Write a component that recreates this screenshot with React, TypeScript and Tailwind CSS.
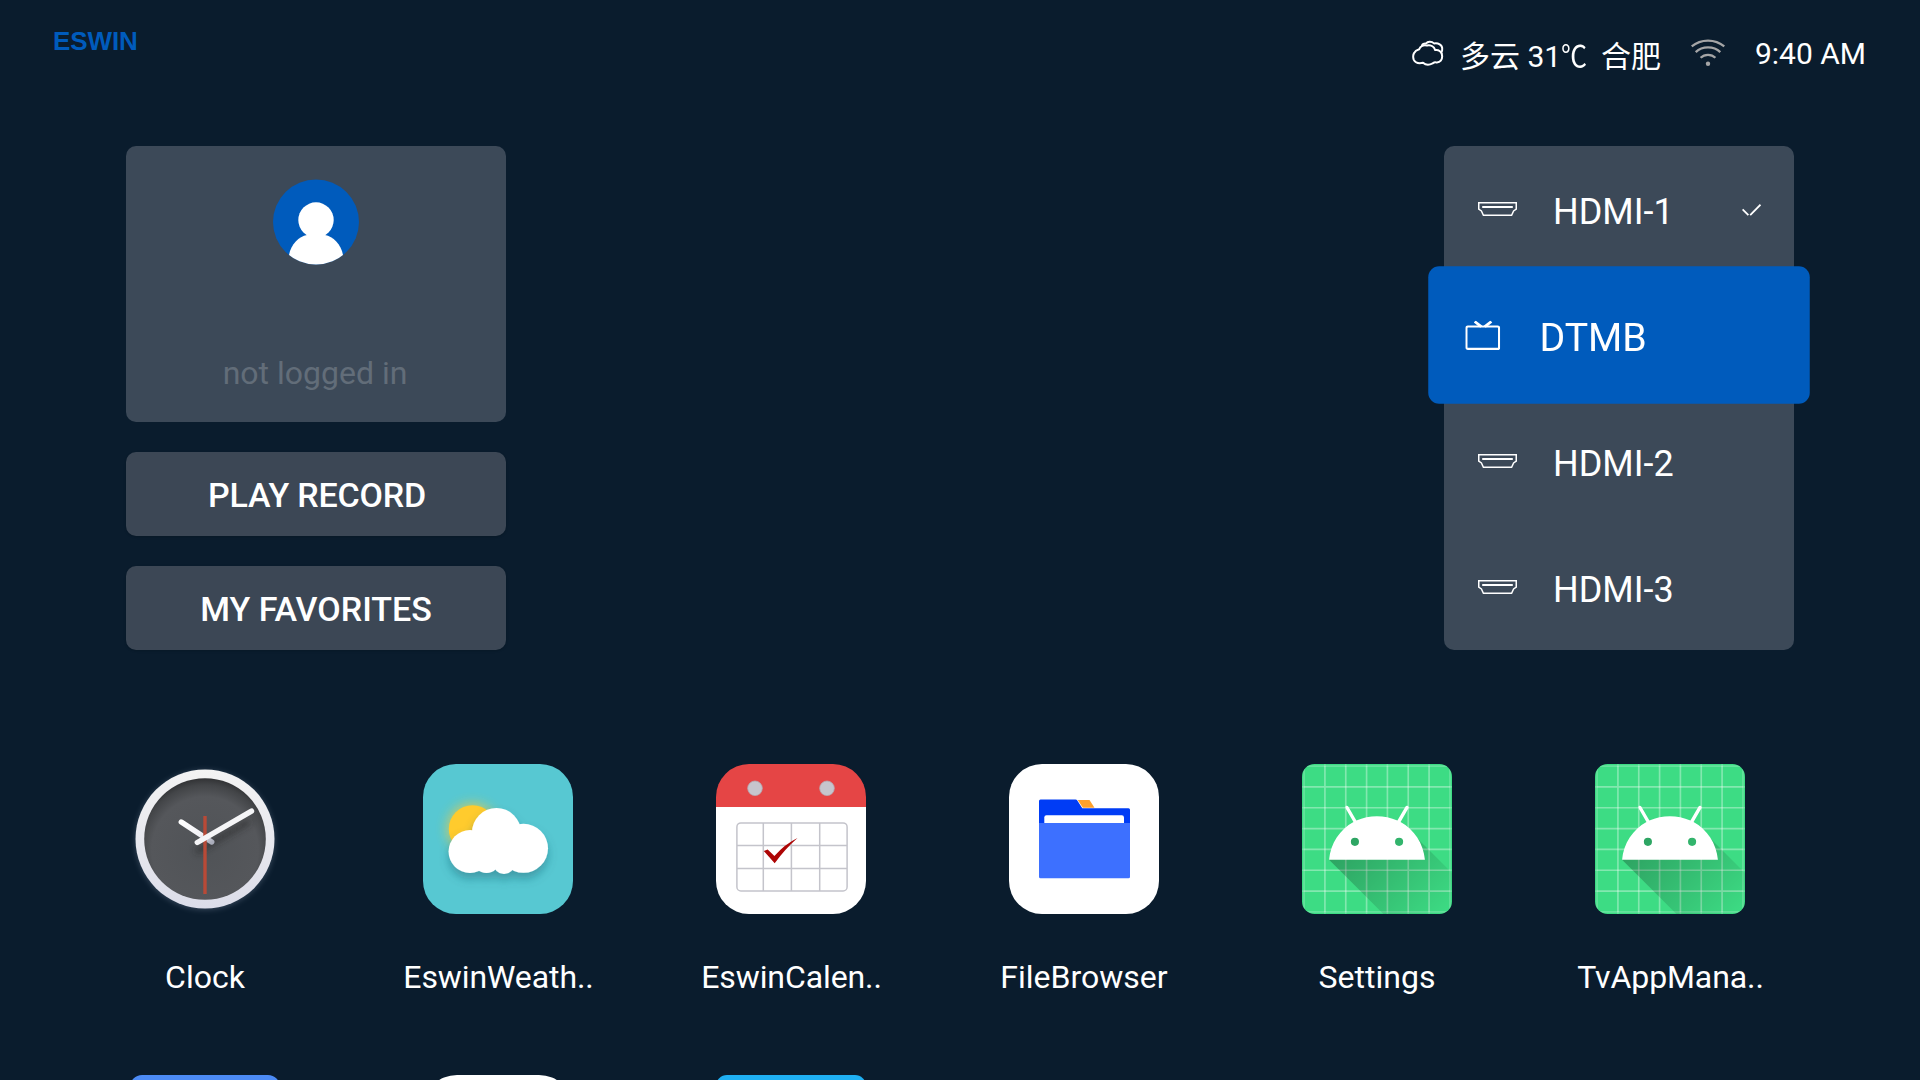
import type { ReactNode } from "react";

function CloudIcon() {
  return (
    <svg width="32" height="26" viewBox="0 0 32 26" fill="none" stroke="#fff" strokeWidth="2" strokeLinejoin="round" strokeLinecap="round">
      <path d="M7.2 9.2C8 6.200 11.600 4.400 15 5.500C18.500 4.800 22 6.600 23.200 10.100C26.800 9.600 30 11.800 30 15.200C30.800 19.600 28 23 24 22.400C22.400 22 21.800 22.600 20.600 23.400C17.600 25 13.600 25 11 22.800C7 23.600 3 22.600 1.700 19.600C0.200 15.200 2 10.600 7.200 9.200Z" />
      <path d="M10 5.400C10.400 4 12.200 3.400 14 3.500C15.600 1.400 19.400 0.900 22 3.400C26 2.600 30.400 4.800 30.200 8.600C30.400 10.600 30 11.800 29.200 12.600" />
    </svg>
  );
}

function WifiIcon() {
  return (
    <svg width="34" height="28" viewBox="0 0 34 28" fill="none" stroke="#a5a5a6" strokeWidth="2.300">
      <path d="M0.700 7.400C9.800 -0.400 24.200 -0.400 33.300 7.400" />
      <path d="M4.700 13.100C11.400 6.900 22.600 6.900 29.300 13.100" />
      <path d="M9.600 18.800C13.600 14.800 20.400 14.800 24.400 18.800" />
      <circle cx="17" cy="24.700" r="2.200" fill="#a5a5a6" stroke="none" />
    </svg>
  );
}

function HdmiIcon() {
  return (
    <svg width="39" height="14" viewBox="0 0 39 14" fill="none" stroke="#fff" strokeWidth="1.500">
      <path d="M0.750 0.750H38.250V7.200L35.600 9L33.600 13.250H5.400L3.400 9L0.750 7.200Z" />
      <path d="M4.200 5H34.800" strokeWidth="2" />
    </svg>
  );
}

function TvIcon() {
  return (
    <svg width="32" height="27" viewBox="0 0 32 27" fill="none" stroke="#fff" strokeWidth="2">
      <rect x="1" y="5.200" width="30" height="20.600" rx="1.400" />
      <path d="M8.600 0.600L14.600 5.400M23.900 0.600L17.900 5.400" strokeWidth="2.600" />
    </svg>
  );
}

function CheckIcon() {
  return (
    <svg width="19" height="12" viewBox="0 0 19 12" fill="none" stroke="#fff" strokeWidth="1.800" className="relative top-px left-px">
      <path d="M0.600 5.400L6.400 11.200M8.200 11.200L18.500 0.700" />
    </svg>
  );
}

function Avatar() {
  return (
    <svg width="86" height="86" viewBox="0 0 86 86">
      <defs>
        <clipPath id="avatar">
          <ellipse cx="43" cy="43" rx="43" ry="42.500" />
        </clipPath>
      </defs>
      <g clipPath="url(#avatar)">
        <rect width="86" height="86" fill="#005bbc" />
        <circle cx="43" cy="41" r="17.700" fill="#fff" />
        <path d="M16 76C18 65 26 57.500 34 56H52C60 57.500 68 65 70 76V86H16Z" fill="#fff" />
      </g>
    </svg>
  );
}

function ClockIcon() {
  return (
    <svg width="150" height="150" viewBox="0 0 150 150" className="overflow-visible">
      <defs>
        <linearGradient id="rim" x1="0" y1="0" x2="0" y2="1">
          <stop offset="0" stopColor="#f3f3f3" />
          <stop offset="1" stopColor="#dcdde9" />
        </linearGradient>
        <radialGradient id="face" gradientUnits="userSpaceOnUse" cx="75" cy="86" r="74">
          <stop offset="0" stopColor="#505357" />
          <stop offset="0.720" stopColor="#55575b" />
          <stop offset="0.880" stopColor="#434548" />
          <stop offset="1" stopColor="#2b2c2e" />
        </radialGradient>
        <linearGradient id="hand" x1="0" y1="0" x2="1" y2="1">
          <stop offset="0" stopColor="#fff" />
          <stop offset="0.650" stopColor="#f0f0f5" />
          <stop offset="1" stopColor="#aaadbb" />
        </linearGradient>
        <filter id="soft" x="-30%" y="-30%" width="160%" height="160%">
          <feGaussianBlur stdDeviation="3" />
        </filter>
      </defs>
      <circle cx="75" cy="76" r="69" fill="#8594ab" opacity="0.450" filter="url(#soft)" />
      <circle cx="75" cy="75" r="69.500" fill="url(#rim)" />
      <circle cx="75" cy="75" r="60.800" fill="url(#face)" />
      <path d="M66 88L120 57" stroke="#222" strokeWidth="6" opacity="0.500" filter="url(#soft)" />
      <path d="M51.300 58L81.700 78" stroke="url(#hand)" strokeWidth="5.400" strokeLinecap="round" />
      <path d="M75 52V130" stroke="#b84a37" strokeWidth="3.400" />
      <path d="M67.300 78.500L121.500 47.200" stroke="#f5f5f7" strokeWidth="5.400" strokeLinecap="round" />
    </svg>
  );
}

function WeatherIcon() {
  return (
    <svg width="150" height="150" viewBox="0 0 150 150">
      <defs>
        <filter id="glow" x="-50%" y="-50%" width="200%" height="200%">
          <feGaussianBlur stdDeviation="6" />
        </filter>
        <filter id="cloudShadow" x="-30%" y="-30%" width="160%" height="170%">
          <feDropShadow dx="0" dy="6" stdDeviation="5" floodColor="#1b5a66" floodOpacity="0.400" />
        </filter>
      </defs>
      <rect width="150" height="150" rx="33" fill="#57c8d2" />
      <circle cx="49.500" cy="64.700" r="25" fill="#ffcb2d" opacity="0.700" filter="url(#glow)" />
      <circle cx="49.500" cy="64.900" r="23.700" fill="#ffcb2d" />
      <g fill="#fff" filter="url(#cloudShadow)">
        <circle cx="47" cy="87.500" r="21.400" />
        <circle cx="73.500" cy="68.500" r="24.500" />
        <circle cx="100.500" cy="84.300" r="24.500" />
        <circle cx="63.500" cy="96" r="13" />
        <circle cx="81" cy="99.500" r="10.500" />
        <rect x="47" y="72" width="52" height="33" />
      </g>
    </svg>
  );
}

function CalendarIcon() {
  return (
    <svg width="150" height="150" viewBox="0 0 150 150">
      <defs>
        <clipPath id="calendar">
          <rect width="150" height="150" rx="33" />
        </clipPath>
      </defs>
      <g clipPath="url(#calendar)">
        <rect y="40" width="150" height="110" fill="#fff" />
        <rect width="150" height="43" fill="#e54545" />
      </g>
      <g fill="#c6c5cd" stroke="#b5aab2" strokeWidth="0.800">
        <circle cx="39" cy="24.300" r="7.300" />
        <circle cx="111" cy="24.300" r="7.300" />
      </g>
      <g fill="none" stroke="#c4c4cb" strokeWidth="1.500">
        <rect x="20.900" y="58.900" width="110.200" height="68" rx="4" />
        <path d="M47.300 59V127M75.400 59V127M103.700 59V127M21 81.500H131M21 104.500H131" />
      </g>
      <path d="M47.800 87L51.700 85.500L58.400 92Q69 80 81.500 74Q69 85 58.700 99.200Z" fill="#ad0505" />
    </svg>
  );
}

function FileIcon() {
  return (
    <svg width="150" height="150" viewBox="0 0 150 150">
      <rect width="150" height="150" rx="33" fill="#fff" />
      <path d="M30 60V37Q30 35.500 31.500 35.500H66.500Q67.700 35.500 68.300 36.500L73.300 44.300H119.500Q121 44.300 121 45.800V60Z" fill="#003cf5" />
      <path d="M68.700 36H80.500L85.500 43.700H73.900Z" fill="#ffa12b" />
      <path d="M35.300 59.500V53.500Q35.300 51.300 37.500 51.300H112.800Q115 51.300 115 53.500V59.500Z" fill="#fff" />
      <path d="M30 59H121V112.700Q121 114.200 119.500 114.200H31.500Q30 114.200 30 112.700Z" fill="#3d70ff" />
    </svg>
  );
}

function AndroidIcon({ id }: { id: string }) {
  const all = [19, 29, 39, 49, 59, 69, 79, 89];
  const inner = [29, 39, 49, 59, 69, 79];
  return (
    <svg width="150" height="150" viewBox="18 18 72 72">
      <defs>
        <clipPath id={`${id}-clip`}>
          <rect x="18" y="18" width="72" height="72" rx="6" />
        </clipPath>
        <linearGradient id={`${id}-shade`} gradientUnits="userSpaceOnUse" x1="42.949" y1="49.598" x2="85.848" y2="92.496">
          <stop offset="0" stopColor="#000" stopOpacity="0.267" />
          <stop offset="1" stopColor="#000" stopOpacity="0" />
        </linearGradient>
      </defs>
      <g clipPath={`url(#${id}-clip)`}>
        <rect x="18" y="18" width="72" height="72" fill="#3ddc84" />
        <g stroke="#fff" strokeOpacity="0.200" strokeWidth="0.800">
          {all.map((v) => (
            <path key={v} d={`M${v} 0V108M0 ${v}H108`} />
          ))}
          {inner.map((v) => (
            <path key={v} d={`M${v} 19V89M19 ${v}H89`} />
          ))}
        </g>
        <path
          fill={`url(#${id}-shade)`}
          d="M31,63.928c0,0 6.4,-11 12.1,-13.1c7.2,-2.6 26,-1.4 26,-1.4l38.1,38.1L107,108.928l-32,-1L31,63.928z"
        />
        <path
          fill="#fff"
          fillRule="evenodd"
          d="M65.3,45.828l3.8,-6.6c0.2,-0.4 0.1,-0.9 -0.3,-1.1c-0.4,-0.2 -0.9,-0.1 -1.1,0.3l-3.9,6.7c-6.3,-2.8 -13.4,-2.8 -19.7,0l-3.9,-6.7c-0.2,-0.4 -0.7,-0.5 -1.1,-0.3C38.8,38.328 38.7,38.828 38.9,39.228l3.8,6.6C36.2,49.428 31.7,56.028 31,63.928h46C76.3,56.028 71.8,49.428 65.3,45.828zM43.4,57.328a1.95,1.95 0 1,1 0,-3.9a1.95,1.95 0 1,1 0,3.9zM64.6,57.328a1.95,1.95 0 1,1 0,-3.9a1.95,1.95 0 1,1 0,3.9z"
        />
      </g>
    </svg>
  );
}

const apps: { name: string; icon: ReactNode; clipped?: boolean }[] = [
  { name: "Clock", icon: <ClockIcon /> },
  { name: "EswinWeath..", icon: <WeatherIcon />, clipped: true },
  { name: "EswinCalen..", icon: <CalendarIcon />, clipped: true },
  { name: "FileBrowser", icon: <FileIcon /> },
  { name: "Settings", icon: <AndroidIcon id="settings" /> },
  { name: "TvAppMana..", icon: <AndroidIcon id="manager" />, clipped: true },
];

const sources = [
  { name: "HDMI-1", checked: true },
  { name: "DTMB", focused: true },
  { name: "HDMI-2" },
  { name: "HDMI-3" },
];

export default function App() {
  return (
    <div className="flex h-[1080px] w-[1920px] flex-col overflow-hidden bg-[#0a1c2d] font-['Roboto','Noto_Sans_CJK_SC',sans-serif] text-white">
      <header className="flex h-[146px] shrink-0 items-start justify-between pr-[54px] pl-[53px]">
        <div className="mt-[25px] font-['Liberation_Sans',sans-serif] text-[26px] leading-[32px] font-bold tracking-[-0.1px] text-[#005bbc]">ESWIN</div>
        <div className="flex items-start text-[30px] leading-[40px] whitespace-pre">
          <div className="mt-[40px]">
            <CloudIcon />
          </div>
          <div className="mt-[37px] ml-[16px] w-[201px]">
            多云 31<span className="-mr-[5px] inline-block origin-left scale-x-[0.87]">℃</span>
            {"  合肥"}
          </div>
          <div className="mt-[39px] ml-[30px]">
            <WifiIcon />
          </div>
          <div className="mt-[34px] ml-[30px]">9:40 AM</div>
        </div>
      </header>

      <main className="flex h-[504px] shrink-0 justify-between px-[126px]">
        <section className="flex w-[380px] flex-col gap-[30px]">
          <div className="flex h-[276px] flex-col items-center justify-between rounded-[10px] bg-[#3c4958] pt-[33px] pb-[29px]">
            <Avatar />
            <div className="pr-[2px] text-[32px] leading-[40px] text-[#626d79]">not logged in</div>
          </div>
          <button className="h-[84px] rounded-[10px] bg-[#3c4755] pt-px pl-[2px] text-[34px] leading-[40px] font-medium tracking-[-0.2px] shadow-sm">
            PLAY RECORD
          </button>
          <button className="h-[84px] rounded-[10px] bg-[#3c4755] pt-px text-[34px] leading-[40px] font-medium shadow-sm">
            MY FAVORITES
          </button>
        </section>

        <section className="flex w-[350px] flex-col rounded-[10px] bg-[#3c4958]">
          {sources.map((s) => (
            <div
              key={s.name}
              className={
                s.focused
                  ? "flex h-[126px] scale-[1.09] items-center rounded-[10px] bg-[#005bbc] px-[34px]"
                  : "flex h-[126px] items-center px-[34px]"
              }
            >
              {s.focused ? <TvIcon /> : <HdmiIcon />}
              <span className="mt-[5px] ml-[36px] flex-1 text-[36px] leading-[44px]">{s.name}</span>
              {s.checked && <CheckIcon />}
            </div>
          ))}
        </section>
      </main>

      <section className="mt-[114px] grid shrink-0 grid-cols-[repeat(6,293px)] pl-[58.500px]">
        {apps.map((app) => (
          <div key={app.name} className="flex h-[311px] flex-col items-center">
            {app.icon}
            <div
              className={
                app.clipped
                  ? "mt-[43px] pl-px text-[32px] leading-[40px] tracking-[-0.1px]"
                  : "mt-[43px] text-[32px] leading-[40px]"
              }
            >
              {app.name}
            </div>
          </div>
        ))}
        <div className="mx-auto h-[150px] w-[150px] rounded-[12px] bg-[#4c8bf5]" />
        <div className="mx-auto h-[150px] w-[150px] rounded-[34px] bg-white" />
        <div className="mx-auto h-[150px] w-[150px] rounded-[11px] bg-[#1fb0f3]" />
      </section>
    </div>
  );
}
